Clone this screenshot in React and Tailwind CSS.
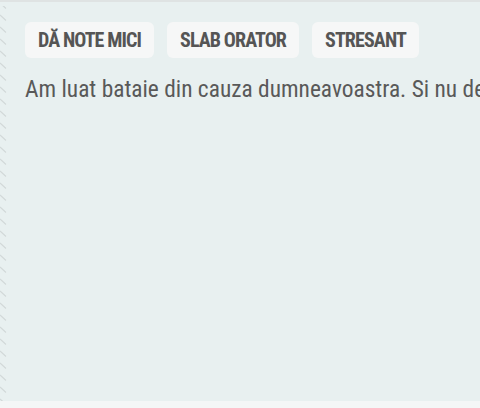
import React from 'react';

const tags = ['DĂ NOTE MICI', 'SLAB ORATOR', 'STRESANT'];

function EdgeHatch() {
  return (
    <svg className="absolute left-0 top-0 h-full w-[10px]" aria-hidden="true">
      <defs>
        <pattern id="hatch" width="10" height="12" patternUnits="userSpaceOnUse">
          <path d="M0 1 L6 6.5" stroke="#d2d9d9" strokeWidth="1.2" fill="none" />
        </pattern>
      </defs>
      <rect x="0" y="4" width="10" height="100%" fill="url(#hatch)" />
    </svg>
  );
}

export default function App() {
  return (
    <div className="w-[480px] h-[408px] overflow-hidden bg-[#f4f6f6]">
      <div className="relative h-[401px] border-t-2 border-[#dfe3e3] bg-[#e8f0f0] pl-[25px] pt-[20px] font-['Roboto_Condensed','Roboto',sans-serif]">
        <EdgeHatch />
        <div className="flex gap-[13px]">
          {tags.map((tag) => (
            <span
              key={tag}
              className="h-[36px] flex items-center px-[13px] rounded-md bg-[#f6f7f7] text-[#555555] text-[20px] font-bold tracking-[-0.9px]"
            >
              {tag}
            </span>
          ))}
        </div>
        <p className="mt-[17px] whitespace-nowrap text-[23.4px] leading-[28px] text-[#595959]">
          Am luat bataie din cauza dumneavoastra. Si nu de asta ma plang, ci de notele pe care le primim.
        </p>
      </div>
    </div>
  );
}
